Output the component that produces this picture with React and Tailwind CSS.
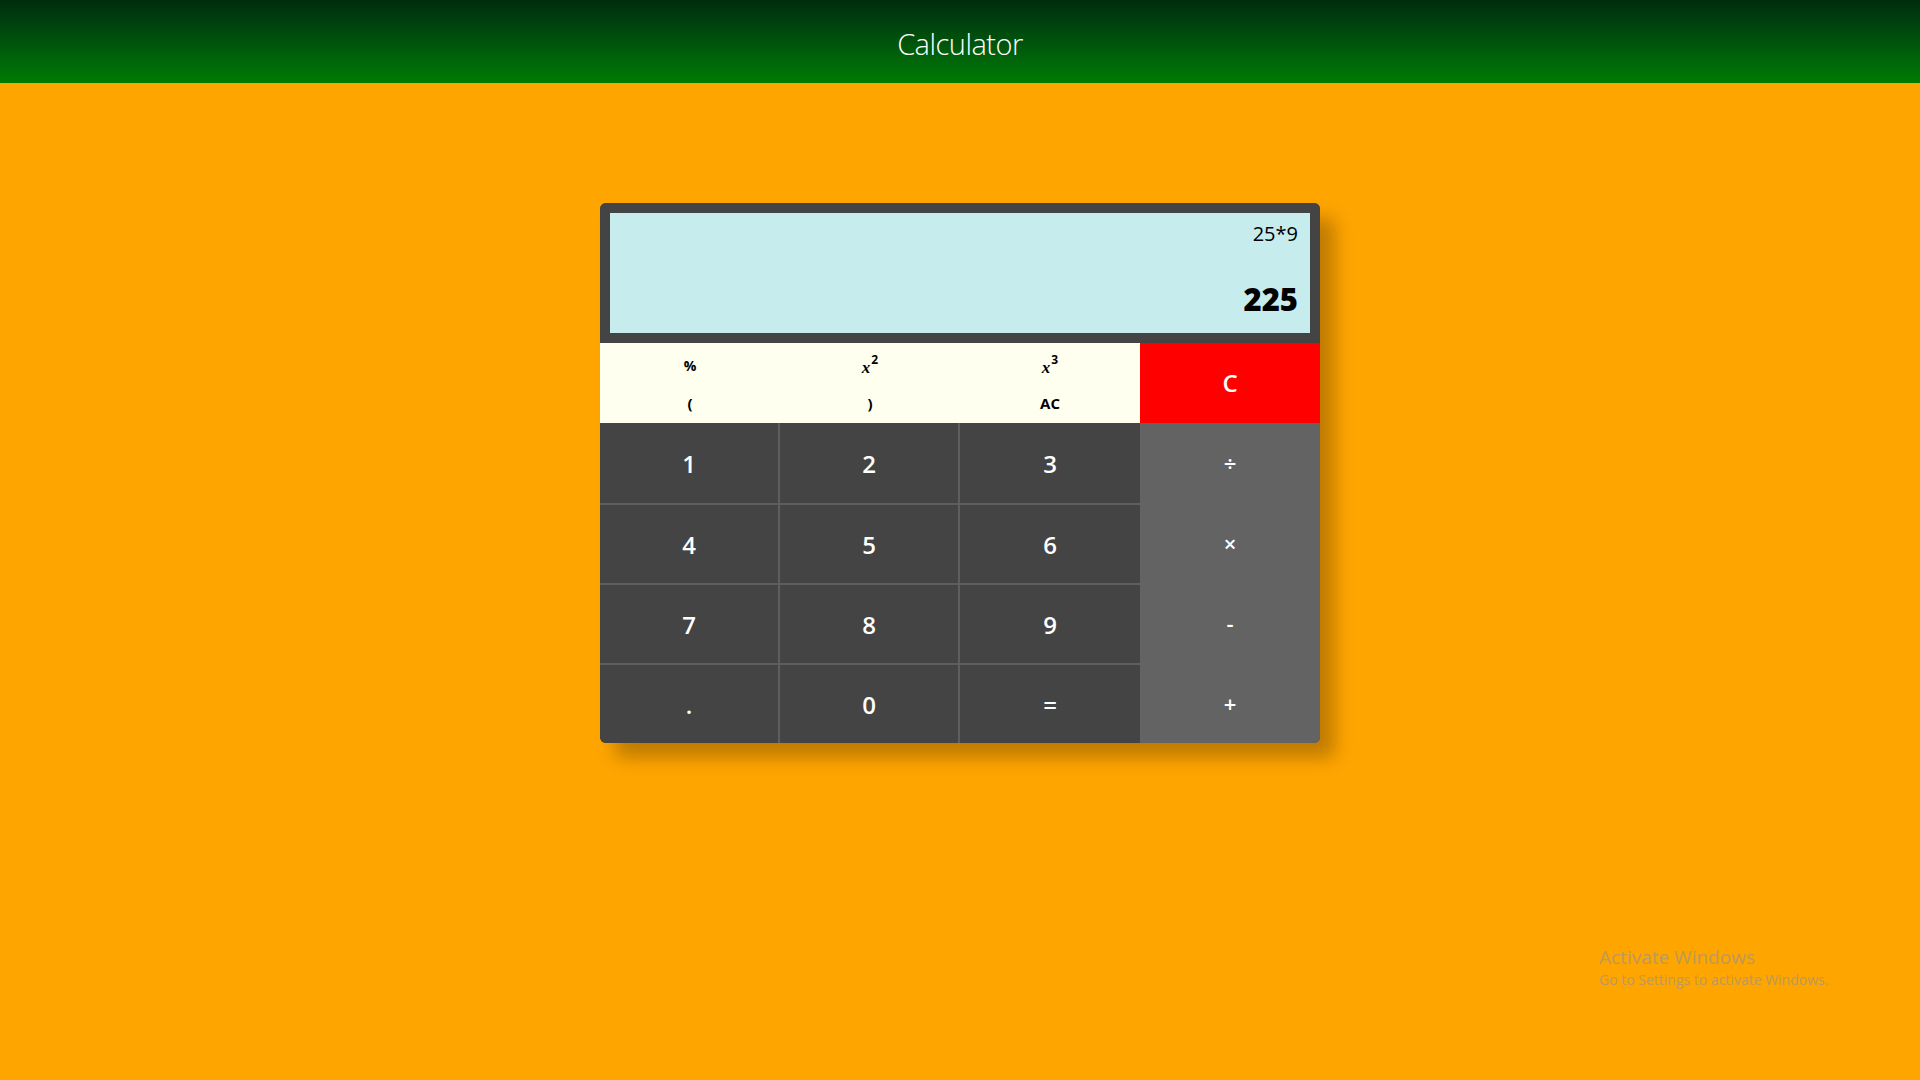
import React, { useState } from "react";

const SANS = { fontFamily: '"Open Sans", "Noto Sans", sans-serif' };

function Pow({ n }) {
  return (
    <span className="inline-flex items-start">
      <i className="font-[Liberation_Serif] text-[17px] font-bold leading-none mt-[5px]">x</i>
      <span className="text-[12px] font-bold leading-none ml-[1px]">{n}</span>
    </span>
  );
}

// 上方浅色功能键，每格上下两个小按钮
function FnCell({ top, bottom, onTop, onBottom }) {
  return (
    <div className="flex flex-col">
      <button
        className="h-10 pt-[4px] flex items-center justify-center text-[14px] font-bold text-black"
        onClick={onTop}
      >
        {top}
      </button>
      <button
        className="h-10 flex items-center justify-center text-[15px] font-bold text-black"
        onClick={onBottom}
      >
        {bottom}
      </button>
    </div>
  );
}

export default function App() {
  const [expr, setExpr] = useState("25*9");
  const [result, setResult] = useState("225");

  const press = (k) => setExpr((e) => e + k);
  const evaluate = () => {
    try {
      // eslint-disable-next-line no-new-func
      const v = Function(`return (${expr.replace(/÷/g, "/").replace(/×/g, "*")})`)();
      setResult(String(v));
    } catch (e) {
      setResult("Error");
    }
  };

  const rows = [
    ["1", "2", "3", "÷"],
    ["4", "5", "6", "×"],
    ["7", "8", "9", "-"],
    [".", "0", "=", "+"],
  ];

  return (
    <div className="min-h-screen bg-[#ffa500] relative" style={SANS}>
      <header className="h-[83px] flex items-center justify-center bg-gradient-to-b from-[#002d0c] to-[#007c00]">
        <h1 className="text-white text-[29px] font-light tracking-[-0.5px] pt-1">Calculator</h1>
      </header>

      <div className="flex justify-center pt-[120px]">
        <div className="w-[720px] rounded-md overflow-hidden bg-[#444444] shadow-[15px_15px_18px_rgba(0,0,0,0.25)]">
          <div className="p-[10px] bg-[#444444]">
            <div className="h-[120px] bg-[#c6ecee] flex flex-col items-end px-3 pt-[6px]">
              <div className="text-[20px] text-black leading-[30px]">{expr}</div>
              <div className="mt-auto mb-[14px] text-[31px] font-extrabold text-black leading-[40px]">
                {result}
              </div>
            </div>
          </div>

          <div className="grid grid-cols-4 h-20 bg-[#fffff0]">
            <FnCell top="%" bottom="(" onTop={() => press("%")} onBottom={() => press("(")} />
            <FnCell top={<Pow n="2" />} bottom=")" onTop={() => press("**2")} onBottom={() => press(")")} />
            <FnCell top={<Pow n="3" />} bottom="AC" onTop={() => press("**3")} onBottom={() => { setExpr(""); setResult(""); }} />
            <button
              className="bg-[#ff0000] text-white text-[24px] font-semibold"
              onClick={() => setExpr((e) => e.slice(0, -1))}
            >
              C
            </button>
          </div>

          {rows.map((row, ri) => (
            <div key={ri} className="grid grid-cols-4 h-20">
              {row.map((k, ci) =>
                ci === 3 ? (
                  <button
                    key={k}
                    className="bg-[#636363] text-white text-[22px] font-semibold"
                    onClick={() => press(k)}
                  >
                    {k}
                  </button>
                ) : (
                  <button
                    key={k}
                    className={
                      "bg-[#444444] text-white text-[24px] font-semibold pt-[2px] border-[#5e5e5e] " +
                      (ci < 2 ? "border-r-2 " : "") +
                      (ri > 0 ? "border-t-2" : "")
                    }
                    onClick={() => (k === "=" ? evaluate() : press(k))}
                  >
                    {k}
                  </button>
                )
              )}
            </div>
          ))}
        </div>
      </div>

      <div className="absolute left-[1599px] top-[944px] text-[#bb9a5c] pointer-events-none">
        <div className="text-[19px] leading-[26px]">Activate Windows</div>
        <div className="text-[14px] leading-[20px]">Go to Settings to activate Windows.</div>
      </div>
    </div>
  );
}
